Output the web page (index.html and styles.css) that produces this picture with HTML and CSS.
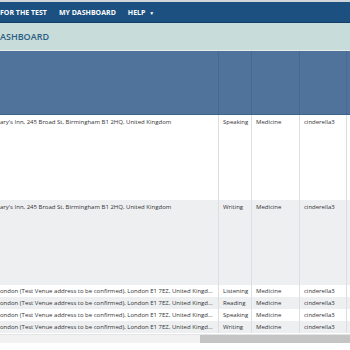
FILE: index.html
```html
<!DOCTYPE html>
<html lang="en">
<head>
    <meta charset="UTF-8">
    <title>My Dashboard</title>
    <link rel="stylesheet" href="styles.css">
</head>
<body>
    <div class="topline"></div>
    <nav class="nav">
        <a href="#">FOR THE TEST</a>
        <a href="#">MY DASHBOARD</a>
        <a href="#">HELP <span class="caret">&#9660;</span></a>
    </nav>
    <div class="titlebar">
        <h1>ASHBOARD</h1>
    </div>
    <div class="gap"></div>
    <table class="bookings">
        <thead>
            <tr>
                <th class="c-venue"></th>
                <th class="c-type"></th>
                <th class="c-subj"></th>
                <th class="c-user"></th>
                <th class="c-more"></th>
            </tr>
        </thead>
        <tbody>
            <tr class="tall">
                <td class="c-venue">ary's Inn, 245 Broad St, Birmingham B1 2HQ, United Kingdom</td>
                <td>Speaking</td>
                <td>Medicine</td>
                <td>cinderella3</td>
                <td></td>
            </tr>
            <tr class="tall">
                <td class="c-venue">ary's Inn, 245 Broad St, Birmingham B1 2HQ, United Kingdom</td>
                <td>Writing</td>
                <td>Medicine</td>
                <td>cinderella3</td>
                <td></td>
            </tr>
            <tr>
                <td class="c-venue">ondon (Test Venue address to be confirmed), London E1 7EZ, United Kingdom</td>
                <td>Listening</td>
                <td>Medicine</td>
                <td>cinderella3</td>
                <td></td>
            </tr>
            <tr>
                <td class="c-venue">ondon (Test Venue address to be confirmed), London E1 7EZ, United Kingdom</td>
                <td>Reading</td>
                <td>Medicine</td>
                <td>cinderella3</td>
                <td></td>
            </tr>
            <tr>
                <td class="c-venue">ondon (Test Venue address to be confirmed), London E1 7EZ, United Kingdom</td>
                <td>Speaking</td>
                <td>Medicine</td>
                <td>cinderella3</td>
                <td></td>
            </tr>
            <tr>
                <td class="c-venue">ondon (Test Venue address to be confirmed), London E1 7EZ, United Kingdom</td>
                <td>Writing</td>
                <td>Medicine</td>
                <td>cinderella3</td>
                <td></td>
            </tr>
        </tbody>
    </table>
    <div class="scroller">
        <div class="thumb"></div>
    </div>
</body>
</html>
```

FILE: styles.css
```css
body {
    margin: 0;
    font-family: "Open Sans", Arial, sans-serif;
    color: #333;
    background-color: #fff;
    overflow: hidden;
}

.topline {
    height: 2px;
    background-color: #d2d6da;
}

.nav {
    display: flex;
    align-items: center;
    gap: 12px;
    height: 20px;
    background-color: #1b5080;
    border-bottom: 1px solid #123f66;
}
.nav a {
    color: #fff;
    text-decoration: none;
    font-weight: bold;
    font-size: 7px;
    white-space: nowrap;
}
.caret {
    font-size: 5px;
    margin-left: 2px;
}

.titlebar {
    display: flex;
    align-items: center;
    height: 27px;
    background-color: #c8dcd9;
}
h1 {
    margin: 0;
    font-size: 9px;
    font-weight: 600;
    color: #2a5d85;
}

.gap {
    height: 1px;
    background-color: #e6ecec;
}

.bookings {
    border-collapse: collapse;
    table-layout: fixed;
    width: 360px;
    font-size: 6px;
}
.bookings th {
    height: 63px;
    background-color: #4f739b;
    border-left: 1px solid #48698f;
    border-bottom: 1px solid #3f6288;
    padding: 0;
}
.bookings th:first-child {
    border-left: none;
}
.bookings td {
    height: 12px;
    padding: 0 1px 0 4px;
    vertical-align: top;
    line-height: 12px;
    white-space: nowrap;
    overflow: hidden;
    text-overflow: ellipsis;
    border-left: 1px solid #dcdfe2;
}
.bookings td:first-child {
    border-left: none;
    padding-left: 0;
    padding-right: 4px;
}
.bookings tbody tr:nth-child(even) td {
    background-color: #eeeff1;
}
.bookings tr.tall td {
    height: 84px;
    padding-top: 1px;
}

.c-venue { width: 218px; }
.c-type { width: 32px; }
.c-subj { width: 47px; }
.c-user { width: 46px; }
.c-more { width: 16px; }

.scroller {
    margin-top: 1px;
    height: 8px;
    background-color: #f1f1f1;
    border-top: 1px solid #e4e4e4;
}
.thumb {
    margin-left: 200px;
    height: 8px;
    background-color: #c4c4c4;
}
```
